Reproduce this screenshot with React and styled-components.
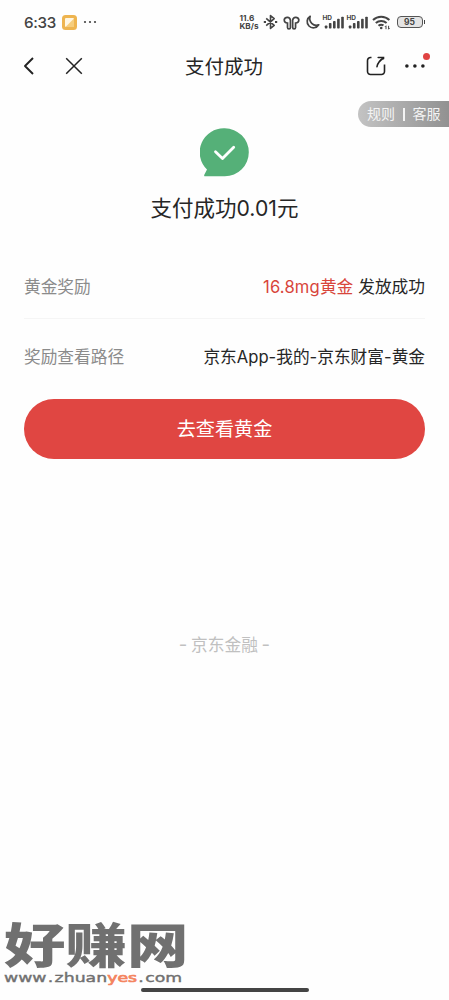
import styled, { createGlobalStyle } from "styled-components";

export default function App() {
  return (
    <>
      <GlobalStyle />
      <Page>
        <StatusBar />
        <NavBar />
        <Shortcuts>
          <span>规则</span>
          <Separator />
          <span>客服</span>
        </Shortcuts>
        <Result>
          <SuccessIcon />
          <h1>
            支付成功<Latin $size={21.2}>0.01</Latin>元
          </h1>
        </Result>
        <Details>
          <Row $height={60}>
            <Label>黄金奖励</Label>
            <Value>
              <Reward>
                <Latin $spacing={0.15}>16.8mg</Latin>黄金
              </Reward>
              发放成功
            </Value>
          </Row>
          <Divider />
          <Row $height={74}>
            <Label>奖励查看路径</Label>
            <Value>
              京东<Latin>App-</Latin>我的<Latin>-</Latin>京东财富
              <Latin>-</Latin>黄金
            </Value>
          </Row>
        </Details>
        <Button>去查看黄金</Button>
        <Brand>
          <Latin $size={18.5}>-</Latin> 京东金融 <Latin $size={18.5}>-</Latin>
        </Brand>
        <Watermark>
          <SiteName>好赚网</SiteName>
          <SiteUrl>
            www<b>.</b>zhuan<em>yes</em>
            <b>.</b>com
          </SiteUrl>
        </Watermark>
        <HomeBar />
      </Page>
    </>
  );
}

function StatusBar() {
  return (
    <Status>
      <Clock>6:33</Clock>
      <AppBadge>
        <svg width="15" height="15" viewBox="0 0 15 15">
          <rect width="15" height="15" rx="3.5" fill="#eeb44f" />
          <rect x="3" y="3" width="9" height="9" rx="1" fill="#fff6e2" />
          <path d="M12 3.5V12H3.5z" fill="#f6cd7c" />
        </svg>
      </AppBadge>
      <svg width="14" height="4" viewBox="0 0 14 4" fill="#444">
        <circle cx="2" cy="2" r="1.1" />
        <circle cx="7" cy="2" r="1.1" />
        <circle cx="12" cy="2" r="1.1" />
      </svg>
      <StatusRight>
        <Speed>
          <span>11.6</span>
          <span>KB/s</span>
        </Speed>
        <BluetoothIcon />
        <EarbudsIcon />
        <MoonIcon />
        <Signal />
        <Signal />
        <WifiIcon />
        <Battery>
          <Charge>95</Charge>
          <i />
        </Battery>
      </StatusRight>
    </Status>
  );
}

function BluetoothIcon() {
  return (
    <svg width="16" height="16" viewBox="0 0 16 16" fill="none" stroke="#444" strokeWidth="1.6">
      <path d="M3.2 4.4l8 7-3.7 3V1.6l3.7 3-8 7" strokeLinejoin="round" />
      <path d="M0.8 8h2.2M12 8h2.2" strokeWidth="2" />
    </svg>
  );
}

function EarbudsIcon() {
  return (
    <svg width="18" height="15" viewBox="0 0 19 16" fill="none" stroke="#444" strokeWidth="1.8">
      <path d="M7.8 13.2V5.4A3.4 3.4 0 0 0 1.2 5c0 2.1 1.4 3.5 3.5 3.5v4.7a1.5 1.5 0 0 0 3.1 0z" />
      <path d="M10.2 13.2V5.4A3.4 3.4 0 0 1 16.8 5c0 2.1-1.4 3.5-3.5 3.5v4.7a1.5 1.5 0 0 1-3.1 0z" />
    </svg>
  );
}

function MoonIcon() {
  return (
    <svg width="15" height="15" viewBox="0 0 15 15" fill="none" stroke="#444" strokeWidth="1.7">
      <path d="M5.2 1.3a6.2 6.2 0 1 0 8.5 8.5A6.6 6.6 0 0 1 5.2 1.3z" strokeLinejoin="round" />
    </svg>
  );
}

function Signal() {
  return (
    <SignalBox>
      <small>HD</small>
      <svg width="20" height="13" viewBox="0 0 20 13" fill="#444">
        <rect x="0.8" y="9.5" width="2.6" height="3" rx="0.8" />
        <rect x="4.9" y="7" width="2.6" height="5.5" rx="0.8" />
        <rect x="9" y="5" width="2.6" height="7.5" rx="0.8" />
        <rect x="13.1" y="2.8" width="2.6" height="9.7" rx="0.8" />
        <rect x="17.2" y="0.8" width="2.6" height="11.7" rx="0.8" />
      </svg>
    </SignalBox>
  );
}

function WifiIcon() {
  return (
    <svg width="19" height="15" viewBox="0 0 19 15" fill="none" stroke="#444" strokeWidth="2">
      <path d="M1 5a12 12 0 0 1 16.4 0M3.8 8a8 8 0 0 1 10.8 0M6.5 10.8a4.3 4.3 0 0 1 5 -0.4" />
      <circle cx="9.2" cy="13" r="1.3" fill="#444" stroke="none" />
      <path d="M14 14.2v-3.4l-1 1M16.6 10.8v3.4l1-1" strokeWidth="1" />
    </svg>
  );
}

function NavBar() {
  return (
    <Nav>
      <NavSide>
        <svg width="12" height="20" viewBox="0 0 12 20" fill="none" stroke="#222" strokeWidth="1.9">
          <path d="M10 2L2 10l8 8" strokeLinejoin="round" />
        </svg>
        <svg width="18" height="18" viewBox="0 0 18 18" fill="none" stroke="#222" strokeWidth="1.5">
          <path d="M1.2 1.2l15.6 15.6M16.8 1.2L1.2 16.8" />
        </svg>
      </NavSide>
      <h2>支付成功</h2>
      <NavSide $end>
        <svg width="20" height="20" viewBox="0 0 20 20" fill="none" stroke="#222" strokeWidth="1.6">
          <path d="M5.5 1.5H4.6A3 3 0 0 0 1.5 4.6v10.8a3 3 0 0 0 3.1 3.1h10.8a3 3 0 0 0 3.1-3.1V8.5" />
          <path d="M12.2 1.5h5.3v1.2M17.2 2.2C13.5 4.5 11.7 7 11 10.6" strokeLinecap="round" />
        </svg>
        <More>
          <svg width="20" height="4" viewBox="0 0 20 4" fill="#222">
            <circle cx="1.9" cy="2" r="1.8" />
            <circle cx="9.9" cy="2" r="1.8" />
            <circle cx="17.9" cy="2" r="1.8" />
          </svg>
          <Dot />
        </More>
      </NavSide>
    </Nav>
  );
}

function SuccessIcon() {
  return (
    <svg width="49" height="49" viewBox="0 0 49 49">
      <path
        d="M24.8 0.3A24 24 0 0 1 24.8 48.3H5.2c-1 0-1.3-.8-.9-1.5L7 41.5A24 24 0 0 1 24.8.3z"
        fill="#55b078"
      />
      <path
        d="M15.5 23.8l7 6.8 11.2-11.3"
        fill="none"
        stroke="#fff"
        strokeWidth="2.8"
        strokeLinecap="round"
        strokeLinejoin="round"
      />
    </svg>
  );
}

const GlobalStyle = createGlobalStyle`
  * {
    box-sizing: border-box;
  }

  body {
    margin: 0;
    background: #fefefe;
    font-family: "Noto Sans CJK SC", sans-serif;
    color: #262626;
  }

  h1,
  h2 {
    margin: 0;
    font-weight: 400;
  }

  svg {
    display: block;
    flex-shrink: 0;
  }
`;

const Page = styled.div`
  display: flex;
  flex-direction: column;
  width: 449px;
  height: 1000px;
  overflow: hidden;
`;

const Status = styled.div`
  display: flex;
  align-items: center;
  height: 44px;
  padding: 0 24px 0 24px;
  color: #444;
`;

const Clock = styled.span`
  width: 38px;
  font: 500 15.2px Inter, sans-serif;
  letter-spacing: -0.3px;
  white-space: nowrap;
`;

const AppBadge = styled.div`
  margin-right: 6px;
`;

const StatusRight = styled.div`
  display: flex;
  align-items: center;
  gap: 4px;
  margin-left: auto;
`;

const Speed = styled.div`
  display: flex;
  flex-direction: column;
  font: 700 8.2px/8px Inter, sans-serif;
`;

const SignalBox = styled.div`
  display: flex;
  position: relative;

  small {
    position: absolute;
    top: -1px;
    left: -1px;
    font: 700 6.5px/6px Inter, sans-serif;
  }
`;

const Battery = styled.div`
  display: flex;
  align-items: center;
  gap: 1px;
  margin-left: 2px;

  i {
    width: 1.5px;
    height: 4px;
    background: #444;
  }
`;

const Charge = styled.span`
  width: 26px;
  height: 12px;
  border: 1.5px solid #555;
  border-radius: 4px;
  background: #e4e4e4;
  font: 700 8.5px/10px Inter, sans-serif;
  text-align: center;
`;

const Nav = styled.div`
  display: grid;
  grid-template-columns: 1fr auto 1fr;
  align-items: center;
  height: 44px;
  padding: 0 24px 0 23px;

  h2 {
    font-size: 19.5px;
    line-height: 28px;
  }
`;

const NavSide = styled.div`
  display: flex;
  align-items: center;
  justify-content: ${(props) => (props.$end ? "flex-end" : "flex-start")};
  gap: ${(props) => (props.$end ? "19px" : "30px")};
`;

const More = styled.div`
  position: relative;
`;

const Dot = styled.span`
  position: absolute;
  top: -11px;
  right: -5px;
  width: 7px;
  height: 7px;
  border-radius: 50%;
  background: #e04342;
`;

const Shortcuts = styled.div`
  display: flex;
  align-items: center;
  align-self: flex-end;
  gap: 8px;
  width: 91px;
  height: 26px;
  margin-top: 13px;
  padding-left: 9px;
  border-radius: 13px 0 0 13px;
  background: linear-gradient(90deg, #c3c3c3, #919191);
  color: #f4f4f4;
  font-size: 14px;
  line-height: 24px;

  span {
    padding-bottom: 2px;
  }
`;

const Separator = styled.i`
  width: 1.5px;
  height: 13px;
  background: #f4f4f4;
`;

const Result = styled.div`
  display: flex;
  flex-direction: column;
  align-items: center;
  height: 129px;
  padding-top: 1px;

  h1 {
    margin-top: 14px;
    font-size: 21.5px;
    line-height: 32px;
  }
`;

const Latin = styled.span`
  font-family: Inter, sans-serif;
  font-size: ${(props) => props.$size || 16.6}px;
  line-height: 1;
  letter-spacing: ${(props) => props.$spacing || 0}px;
`;

const Details = styled.div`
  padding: 0 24px;
`;

const Row = styled.div`
  display: flex;
  justify-content: space-between;
  align-items: center;
  height: ${(props) => props.$height}px;
  margin-bottom: 2px;
  font-size: 16.7px;
  line-height: 24px;
  white-space: nowrap;
`;

const Label = styled.span`
  color: #8b8b8b;
`;

const Value = styled.span`
  color: #262626;
`;

const Reward = styled.span`
  margin-right: 5px;
  color: #d8453b;
`;

const Divider = styled.div`
  height: 1px;
  background: #f5f5f5;
`;

const Button = styled.button`
  height: 60px;
  margin: 4px 24px 0;
  padding: 0 0 2px;
  border: none;
  border-radius: 30px;
  background: #e04642;
  color: #fff;
  font-family: inherit;
  font-size: 19.1px;
`;

const Brand = styled.p`
  margin: 173px 0 0;
  color: #c0c0c0;
  font-size: 16.7px;
  line-height: 24px;
  text-align: center;
`;

const Watermark = styled.div`
  width: 190px;
  margin-top: auto;
  padding-left: 4px;
`;

const SiteName = styled.div`
  height: 49px;
  color: #707070;
  font-family: "Liberation Sans", "Noto Sans CJK SC", sans-serif;
  font-size: 48px;
  font-weight: 900;
  line-height: 49px;
  white-space: nowrap;
  transform: scaleX(1.28);
  transform-origin: left;
`;

const SiteUrl = styled.div`
  height: 14px;
  color: #707070;
  font: 400 13px/14px "DejaVu Sans", sans-serif;
  -webkit-text-stroke: 0.4px;
  white-space: nowrap;
  transform: scaleX(1.33);
  transform-origin: left;

  b {
    margin: 0 1px;
    font-weight: 400;
  }

  em {
    color: #f4845f;
    font-style: normal;
    -webkit-text-stroke: 0.7px;
  }
`;

const HomeBar = styled.div`
  align-self: center;
  width: 168px;
  height: 4px;
  margin: 3px 0 8px;
  border-radius: 2px;
  background: #444;
`;
